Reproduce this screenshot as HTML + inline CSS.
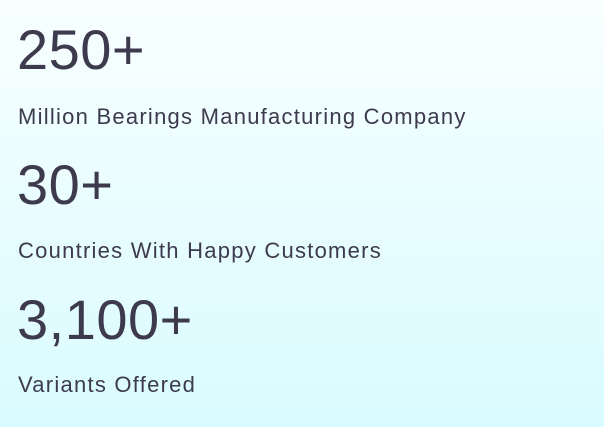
<!DOCTYPE html>
<html><head><style>
html,body{margin:0;padding:0}
body{width:604px;height:427px;overflow:hidden;background:linear-gradient(180deg,#f8ffff 0%,#d9fbff 100%);font-family:"Liberation Sans",sans-serif;color:#3d3a4e;position:relative}
.n{position:absolute;left:17px;font-size:56px;line-height:1;white-space:nowrap;letter-spacing:0.5px}
.l{position:absolute;left:18px;font-size:22px;line-height:1;white-space:nowrap;letter-spacing:1.25px}
</style></head><body>
<div class="n" style="top:22px">250+</div>
<div class="l" style="top:106px">Million Bearings Manufacturing Company</div>
<div class="n" style="top:157px">30+</div>
<div class="l" style="top:240px">Countries With Happy Customers</div>
<div class="n" style="top:292px">3,100+</div>
<div class="l" style="top:374px">Variants Offered</div>
</body></html>
